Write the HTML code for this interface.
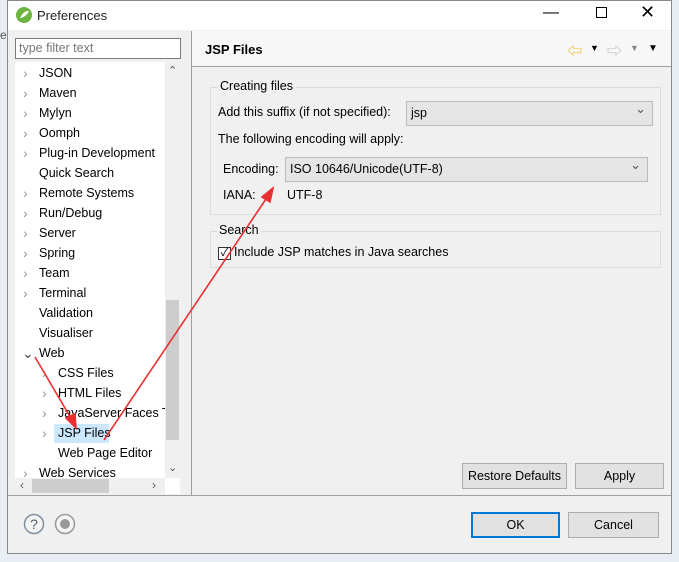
<!DOCTYPE html>
<html><head><style>
*{box-sizing:border-box;margin:0;padding:0}
body{width:679px;height:562px;background:#e8eef4;position:relative;overflow:hidden;font-family:"Liberation Sans","Noto Sans CJK SC",sans-serif;font-size:12.5px;color:#000}
.a{position:absolute}
.win{left:7px;top:0;width:665px;height:554px;background:#f0f0f0;border:1px solid #888}
.row{position:absolute;left:39px;height:20px;line-height:20px;white-space:nowrap}
.chev{position:absolute;color:#999;font-size:14px;line-height:20px}
.btn{position:absolute;background:#e1e1e1;border:1px solid #adadad;text-align:center;line-height:24px}
.combo{position:absolute;background:#e5e5e5;border:1px solid #bbb;line-height:22px;padding-left:4px}
.combo:after{content:"⌄";position:absolute;right:6px;top:-4px;color:#555;font-size:13px}
</style></head><body>
<div class="a win"></div>
<div class="a" style="left:8px;top:1px;width:663px;height:29px;background:#fff"></div>
<svg class="a" style="left:15px;top:6px" width="18" height="18"><circle cx="9" cy="9" r="8" fill="#6db33f"/><path d="M5 12 Q9 4 14 5 Q12 10 6 12Z" fill="#fff"/></svg>
<div class="a" style="left:37px;top:8px;font-size:13px;color:#222">Preferences</div>
<div class="a" style="left:543px;top:4px;font-size:16px">—</div>
<div class="a" style="left:596px;top:7px;width:11px;height:11px;border:1px solid #000"></div>
<div class="a" style="left:640px;top:2px;font-size:18px">✕</div>
<div class="a" style="left:0;top:28px;font-size:12px;color:#555">e</div>

<div class="a" style="left:15px;top:38px;width:166px;height:21px;background:#fff;border:1px solid #7a7a7a;color:#777;padding-left:3px;line-height:19px">type filter text</div>
<div class="a" style="left:15px;top:62px;width:165px;height:432px;background:#fff"></div>
<div class="a" style="left:165px;top:62px;width:15px;height:416px;background:#f0f0f0"></div>
<div class="a" style="left:166px;top:300px;width:13px;height:140px;background:#cdcdcd"></div>
<div class="a" style="left:168px;top:64px;font-size:11px;color:#555">⌃</div>
<div class="a" style="left:168px;top:461px;font-size:11px;color:#555">⌄</div>
<div class="a" style="left:15px;top:478px;width:150px;height:16px;background:#f0f0f0"></div>
<div class="a" style="left:32px;top:479px;width:77px;height:14px;background:#cdcdcd"></div>
<div class="a" style="left:20px;top:478px;color:#555;font-size:12px">‹</div>
<div class="a" style="left:152px;top:478px;color:#555;font-size:12px">›</div>

<div class="a" style="left:0;top:0">
<span class="chev" style="left:23px;top:63px">›</span><div class="row" style="top:63px">JSON</div>
<span class="chev" style="left:23px;top:83px">›</span><div class="row" style="top:83px">Maven</div>
<span class="chev" style="left:23px;top:103px">›</span><div class="row" style="top:103px">Mylyn</div>
<span class="chev" style="left:23px;top:123px">›</span><div class="row" style="top:123px">Oomph</div>
<span class="chev" style="left:23px;top:143px">›</span><div class="row" style="top:143px">Plug-in Development</div>
<div class="row" style="top:163px">Quick Search</div>
<span class="chev" style="left:23px;top:183px">›</span><div class="row" style="top:183px">Remote Systems</div>
<span class="chev" style="left:23px;top:203px">›</span><div class="row" style="top:203px">Run/Debug</div>
<span class="chev" style="left:23px;top:223px">›</span><div class="row" style="top:223px">Server</div>
<span class="chev" style="left:23px;top:243px">›</span><div class="row" style="top:243px">Spring</div>
<span class="chev" style="left:23px;top:263px">›</span><div class="row" style="top:263px">Team</div>
<span class="chev" style="left:23px;top:283px">›</span><div class="row" style="top:283px">Terminal</div>
<div class="row" style="top:303px">Validation</div>
<div class="row" style="top:323px">Visualiser</div>
<span class="chev" style="left:22px;top:343px;color:#444">⌄</span><div class="row" style="top:343px">Web</div>
<span class="chev" style="left:42px;top:363px">›</span><div class="row" style="top:363px;left:58px">CSS Files</div>
<span class="chev" style="left:42px;top:383px">›</span><div class="row" style="top:383px;left:58px">HTML Files</div>
<span class="chev" style="left:42px;top:403px">›</span><div class="row" style="top:403px;left:58px;width:107px;overflow:hidden">JavaServer Faces T</div>
<span class="chev" style="left:42px;top:423px">›</span><div class="a" style="left:54px;top:424px;width:55px;height:19px;background:#cce8ff"></div><div class="row" style="top:423px;left:58px">JSP Files</div>
<div class="row" style="top:443px;left:58px">Web Page Editor</div>
<span class="chev" style="left:23px;top:463px">›</span><div class="row" style="top:463px;height:15px;overflow:hidden">Web Services</div>
</div>

<div class="a" style="left:191px;top:31px;width:1px;height:464px;background:#a0a0a0"></div>
<div class="a" style="left:192px;top:31px;width:479px;height:36px;background:#f7f7f7;border-bottom:1px solid #a0a0a0"></div>
<div class="a" style="left:205px;top:42px;font-weight:bold;font-size:13px">JSP Files</div>
<div class="a" style="left:567px;top:40px;color:#e8b820;font-size:15px">⇦</div>
<div class="a" style="left:590px;top:43px;font-size:9px">▼</div>
<div class="a" style="left:607px;top:40px;color:#bbb;font-size:15px">⇨</div>
<div class="a" style="left:630px;top:43px;font-size:9px;color:#888">▼</div>
<div class="a" style="left:648px;top:43px;font-size:10px">▼</div>

<div class="a" style="left:210px;top:87px;width:451px;height:128px;border:1px solid #dcdcdc"></div>
<div class="a" style="left:217px;top:79px;background:#f0f0f0;padding:0 3px">Creating files</div>
<div class="a" style="left:218px;top:105px">Add this suffix (if not specified):</div>
<div class="combo" style="left:406px;top:101px;width:247px;height:25px">jsp</div>
<div class="a" style="left:218px;top:132px">The following encoding will apply:</div>
<div class="a" style="left:223px;top:162px">Encoding:</div>
<div class="combo" style="left:285px;top:157px;width:363px;height:25px">ISO 10646/Unicode(UTF-8)</div>
<div class="a" style="left:223px;top:188px">IANA:</div>
<div class="a" style="left:287px;top:188px">UTF-8</div>

<div class="a" style="left:210px;top:231px;width:451px;height:37px;border:1px solid #dcdcdc"></div>
<div class="a" style="left:217px;top:223px;background:#f0f0f0;padding:0 2px">Search</div>
<div class="a" style="left:218px;top:247px;width:13px;height:13px;border:1px solid #333;background:#fff;font-size:11px;line-height:11px;text-align:center">✓</div>
<div class="a" style="left:234px;top:245px">Include JSP matches in Java searches</div>

<div class="btn" style="left:462px;top:463px;width:105px;height:26px">Restore Defaults</div>
<div class="btn" style="left:575px;top:463px;width:89px;height:26px">Apply</div>
<div class="a" style="left:8px;top:495px;width:663px;height:1px;background:#a0a0a0"></div>
<svg class="a" style="left:23px;top:513px" width="64" height="22"><circle cx="11" cy="11" r="9.5" fill="#f4f4f4" stroke="#8090a0" stroke-width="1.5"/><text x="11" y="16" text-anchor="middle" font-size="14" fill="#506070" font-family="Liberation Sans">?</text><circle cx="42" cy="11" r="9.5" fill="#f4f4f4" stroke="#999" stroke-width="1.5"/><circle cx="42" cy="11" r="5" fill="#999"/></svg>
<div class="btn" style="left:471px;top:512px;width:89px;height:26px;border:2px solid #0078d7;line-height:22px">OK</div>
<div class="btn" style="left:568px;top:512px;width:91px;height:26px">Cancel</div>

<svg class="a" style="left:0;top:0" width="679" height="562">
<g stroke="#e83030" stroke-width="1.6" fill="#e83030">
<line x1="35" y1="357" x2="72" y2="420"/>
<polygon points="76,428 66,418 75,414"/>
<line x1="104" y1="440" x2="268" y2="196"/>
<polygon points="273,188 270,202 262,197"/>
</g></svg>
</body></html>
